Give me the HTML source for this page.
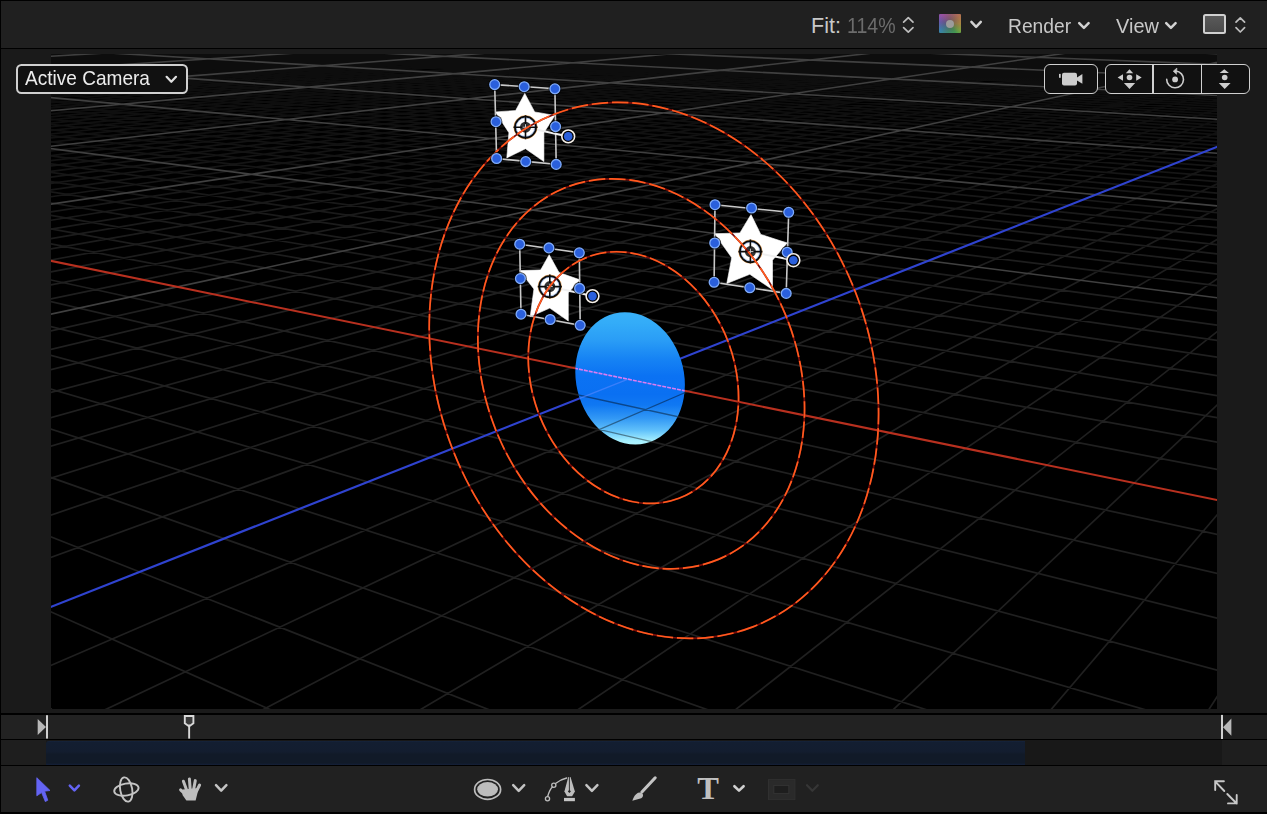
<!DOCTYPE html>
<html><head><meta charset="utf-8"><style>
html,body{margin:0;padding:0;background:#000;width:1269px;height:814px;overflow:hidden;position:relative;font-family:"Liberation Sans",sans-serif}
.a{position:absolute}
.t{position:absolute;white-space:nowrap;line-height:1}
</style></head><body>
<div class="a" style="left:1267px;top:0;width:2px;height:814px;background:#fff"></div>
<div class="a" style="left:1px;top:1px;width:1266px;height:46.5px;background:#202020"></div>
<div class="a" style="left:1px;top:49px;width:1266px;height:664px;background:#1a1a1a"></div>
<div class="a" style="left:1px;top:714.5px;width:1266px;height:24px;background:#222"></div>
<div class="a" style="left:1222px;top:714.5px;width:45px;height:24px;background:#1e1e1e"></div>
<div class="a" style="left:1px;top:740px;width:1266px;height:24.5px;background:#1e1e1e"></div>
<div class="a" style="left:46px;top:740px;width:1176px;height:24.5px;background:#181818"></div>
<div class="a" style="left:46px;top:740.5px;width:979px;height:24px;background:linear-gradient(#15233c 0px,#131e31 1.5px,#131d2f 45%,#111a28 55%,#111a28 92%,#14203a 100%);border-top-left-radius:3px"></div>
<div class="a" style="left:1px;top:766px;width:1266px;height:45.5px;background:#212121"></div>
<svg class="a" style="left:0;top:0" width="1269" height="814" viewBox="0 0 1269 814">
<defs>
<clipPath id="cc"><rect x="51" y="54" width="1166" height="655"/></clipPath>
<linearGradient id="dg" x1="0" y1="312.5" x2="0" y2="444.8" gradientUnits="userSpaceOnUse" gradientTransform="rotate(-76.5 630.1 378.4)">
<stop offset="0" stop-color="#38b0f8"/><stop offset="0.08" stop-color="#33acf8"/><stop offset="0.21" stop-color="#2a9df6"/><stop offset="0.35" stop-color="#1683f4"/>
<stop offset="0.48" stop-color="#0b72f3"/><stop offset="0.62" stop-color="#0a70f2"/><stop offset="0.70" stop-color="#1078f2"/><stop offset="0.80" stop-color="#3298f5"/>
<stop offset="0.89" stop-color="#60c0fa"/><stop offset="0.97" stop-color="#a6f0ff"/><stop offset="1" stop-color="#b0f4ff"/></linearGradient>
<clipPath id="dclip"><ellipse cx="630.1" cy="378.4" rx="66.8" ry="54.0" transform="rotate(76.5 630.1 378.4)"/></clipPath>
<clipPath id="below"><polygon points="1683.6,595.6 -876.5,70.7 1269,900 0,900"/></clipPath>
<linearGradient id="gmg" x1="0" y1="54" x2="0" y2="709" gradientUnits="userSpaceOnUse">
<stop offset="0" stop-color="#666"/><stop offset="0.07" stop-color="#707070"/><stop offset="0.15" stop-color="#999"/><stop offset="0.27" stop-color="#e0e0e0"/><stop offset="0.38" stop-color="#fff"/></linearGradient>
<mask id="gm" maskUnits="userSpaceOnUse" x="0" y="0" width="1269" height="814"><rect x="0" y="0" width="1269" height="814" fill="url(#gmg)"/></mask>
</defs>
<rect x="51" y="54" width="1166" height="655" fill="#000"/>
<g clip-path="url(#cc)">
<path d="M1666.7 2212.0L1689.3 51.2M1666.7 2212.0L-1235.8 86.2M1258.3 1913.0L1670.3 50.6M1670.8 1818.1L-1202.1 84.8M698.9 1503.3L1632.9 49.5M1675.8 1336.6L-1136.9 82.0M499.0 1356.8L1614.5 49.0M1677.5 1178.7L-1105.4 80.6M333.7 1235.8L1596.3 48.5M1678.8 1053.3L-1074.6 79.3M194.9 1134.1L1578.4 48.0M1679.9 951.3L-1044.4 78.0M76.6 1047.5L1560.7 47.5M1680.8 866.7L-1014.9 76.7M-25.4 972.7L1543.2 47.0M1681.5 795.4L-986.1 75.5M-114.3 907.7L1525.9 46.5M1682.2 734.5L-957.8 74.2M-192.4 850.4L1508.8 46.0M1682.7 681.9L-930.1 73.1M-261.6 799.8L1491.9 45.5M1683.2 636.0L-903.1 71.9M-378.7 714.0L1458.6 44.6M1684.0 559.7L-850.5 69.6M-428.7 677.4L1442.3 44.1M1684.3 527.7L-825.0 68.5M-474.1 644.1L1426.2 43.6M1684.6 498.9L-800.1 67.5M-515.4 613.9L1410.2 43.2M1684.9 472.9L-775.6 66.4M-553.2 586.2L1394.4 42.7M1685.1 449.3L-751.6 65.4M-588.0 560.7L1378.8 42.3M1685.4 427.7L-728.0 64.3M-620.0 537.3L1363.4 41.8M1685.6 408.0L-704.9 63.4M-649.6 515.6L1348.1 41.4M1685.8 389.9L-682.3 62.4M-677.0 495.5L1333.0 41.0M1685.9 373.2L-660.1 61.4M-726.3 459.4L1303.3 40.1M1686.3 343.4L-616.8 59.6M-748.5 443.1L1288.7 39.7M1686.4 330.0L-595.8 58.7M-769.4 427.9L1274.3 39.3M1686.5 317.6L-575.1 57.8M-788.9 413.6L1260.0 38.9M1686.7 306.0L-554.9 56.9M-807.3 400.1L1245.8 38.5M1686.8 295.1L-535.0 56.0M-824.6 387.4L1231.8 38.0M1686.9 284.8L-515.4 55.2M-840.9 375.5L1218.0 37.7M1687.0 275.2L-496.2 54.4M-856.4 364.2L1204.3 37.3M1687.1 266.1L-477.3 53.5M-871.0 353.4L1190.7 36.9M1687.2 257.6L-458.7 52.7M-898.0 333.7L1164.0 36.1M1687.3 241.8L-422.5 51.2M-910.5 324.5L1150.9 35.7M1687.4 234.5L-404.8 50.4M-922.4 315.8L1137.8 35.4M1687.5 227.6L-387.5 49.7M-933.8 307.5L1125.0 35.0M1687.5 221.0L-370.4 48.9M-944.6 299.5L1112.2 34.6M1687.6 214.8L-353.6 48.2M-954.9 292.0L1099.6 34.3M1687.7 208.8L-337.1 47.5M-964.8 284.7L1087.1 33.9M1687.7 203.1L-320.9 46.8M-974.3 277.8L1074.7 33.5M1687.8 197.7L-304.9 46.1M-983.3 271.2L1062.5 33.2M1687.8 192.5L-289.1 45.4M-1000.3 258.7L1038.3 32.5M1687.9 182.8L-258.4 44.1M-1008.4 252.8L1026.4 32.2M1688.0 178.2L-243.3 43.5M-1016.0 247.2L1014.6 31.8M1688.0 173.8L-228.5 42.8M-1023.5 241.8L1003.0 31.5M1688.1 169.6L-214.0 42.2M-1030.6 236.6L991.4 31.2M1688.1 165.5L-199.6 41.6M-1037.4 231.5L980.0 30.8M1688.2 161.7L-185.5 41.0M-1044.1 226.7L968.6 30.5M1688.2 157.9L-171.6 40.4M-1050.4 222.0L957.4 30.2M1688.2 154.3L-157.9 39.8M-1056.6 217.5L946.3 29.9M1688.3 150.8L-144.3 39.2M-1068.3 208.9L924.4 29.2M1688.3 144.2L-117.9 38.1M-1073.9 204.9L913.5 28.9M1688.4 141.1L-104.9 37.5M-1079.2 200.9L902.8 28.6M1688.4 138.0L-92.2 37.0M-1084.5 197.1L892.2 28.3M1688.4 135.1L-79.6 36.4M-1089.5 193.4L881.7 28.0M1688.5 132.3L-67.2 35.9M-1094.4 189.8L871.3 27.7M1688.5 129.5L-55.0 35.4M-1099.1 186.4L860.9 27.4M1688.5 126.9L-42.9 34.8M-1103.7 183.0L850.7 27.1M1688.6 124.3L-31.0 34.3M-1108.2 179.7L840.6 26.8M1688.6 121.8L-19.3 33.8M-1116.7 173.5L820.5 26.3M1688.6 117.0L3.7 32.8M-1120.8 170.5L810.7 26.0M1688.7 114.7L15.0 32.3M-1124.8 167.6L800.9 25.7M1688.7 112.5L26.1 31.9M-1128.6 164.7L791.2 25.4M1688.7 110.4L37.0 31.4M-1132.4 162.0L781.6 25.1M1688.7 108.3L47.9 30.9M-1136.0 159.3L772.0 24.9M1688.7 106.2L58.5 30.5M-1139.6 156.7L762.6 24.6M1688.8 104.3L69.1 30.0M-1143.1 154.2L753.2 24.3M1688.8 102.3L79.5 29.6M-1146.4 151.7L743.9 24.1M1688.8 100.4L89.8 29.1M-1152.9 146.9L725.6 23.5M1688.8 96.8L110.0 28.2M-1156.1 144.6L716.5 23.3M1688.9 95.1L119.8 27.8M-1159.1 142.4L707.6 23.0M1688.9 93.4L129.6 27.4M-1162.1 140.2L698.7 22.8M1688.9 91.8L139.3 27.0M-1165.0 138.1L689.8 22.5M1688.9 90.1L148.8 26.6M-1167.9 136.0L681.1 22.3M1688.9 88.6L158.2 26.2M-1170.6 134.0L672.4 22.0M1688.9 87.0L167.5 25.8M-1173.3 132.0L663.8 21.8M1689.0 85.5L176.7 25.4M-1176.0 130.1L655.3 21.5M1689.0 84.1L185.8 25.0M-1181.1 126.3L638.4 21.0M1689.0 81.3L203.6 24.2M-1183.6 124.5L630.1 20.8M1689.0 79.9L212.4 23.8M-1186.0 122.7L621.8 20.6M1689.0 78.6L221.0 23.5M-1188.3 121.0L613.6 20.3M1689.0 77.3L229.6 23.1M-1190.7 119.3L605.5 20.1M1689.1 76.0L238.0 22.7M-1192.9 117.7L597.4 19.9M1689.1 74.7L246.4 22.4M-1195.1 116.0L589.5 19.6M1689.1 73.5L254.7 22.0M-1197.3 114.4L581.5 19.4M1689.1 72.3L262.8 21.7M-1199.4 112.9L573.6 19.2M1689.1 71.1L270.9 21.3M-1203.6 109.9L558.1 18.7M1689.1 68.9L286.8 20.6M-1205.6 108.4L550.4 18.5M1689.1 67.8L294.6 20.3M-1207.5 107.0L542.8 18.3M1689.2 66.7L302.3 20.0M-1209.5 105.5L535.2 18.1M1689.2 65.6L310.0 19.6M-1211.3 104.2L527.7 17.9M1689.2 64.6L317.5 19.3M-1213.2 102.8L520.3 17.6M1689.2 63.6L325.0 19.0M-1215.0 101.5L512.9 17.4M1689.2 62.6L332.4 18.7M-1216.8 100.2L505.5 17.2M1689.2 61.6L339.7 18.3M-1218.5 98.9L498.2 17.0M1689.2 60.6L346.9 18.0M-1221.9 96.4L483.8 16.6M1689.2 58.8L361.2 17.4M-1223.6 95.2L476.7 16.4M1689.3 57.9L368.2 17.1M-1225.2 94.0L469.7 16.2M1689.3 57.0L375.1 16.8M-1226.8 92.8L462.7 16.0M1689.3 56.1L382.0 16.5M-1228.4 91.7L455.7 15.8M1689.3 55.2L388.8 16.2M-1229.9 90.5L448.8 15.6M1689.3 54.4L395.5 15.9M-1231.4 89.4L441.9 15.4M1689.3 53.6L402.1 15.7M-1232.9 88.4L435.1 15.2M1689.3 52.8L408.7 15.4M-1234.4 87.3L428.4 15.0M1689.3 52.0L415.2 15.1" stroke="#202020" stroke-width="1.7" fill="none" mask="url(#gm)"/>
<path d="M945.8 1684.1L1651.4 50.1M1673.7 1541.5L-1169.1 83.4M-702.5 476.8L1318.1 40.5M1686.1 357.7L-638.2 60.5M-884.8 343.3L1177.3 36.5M1687.2 249.5L-440.4 52.0M-992.0 264.8L1050.3 32.8M1687.9 187.5L-273.6 44.8M-1062.6 213.1L935.3 29.5M1688.3 147.4L-131.0 38.6M-1112.5 176.6L830.5 26.5M1688.6 119.4L-7.7 33.3M-1149.7 149.3L734.7 23.8M1688.8 98.6L99.9 28.7M-1178.6 128.2L646.8 21.3M1689.0 82.7L194.8 24.6M-1201.5 111.4L565.8 19.0M1689.1 70.0L278.9 21.0M-1220.3 97.6L491.0 16.8M1689.2 59.7L354.1 17.7M-1235.8 86.2L421.7 14.8M1689.3 51.2L421.7 14.8" stroke="#404040" stroke-width="1.6" fill="none"/>
<line x1="1683.6" y1="595.6" x2="-876.5" y2="70.7" stroke="#b8301f" stroke-width="2"/>
<line x1="-323.3" y1="754.6" x2="1475.2" y2="45.0" stroke="#2f43cf" stroke-width="2.2"/>
<ellipse cx="630.1" cy="378.4" rx="66.8" ry="54.0" transform="rotate(76.5 630.1 378.4)" fill="url(#dg)"/>
<g clip-path="url(#dclip)"><g clip-path="url(#below)">
<path d="M1666.7 2212.0L1689.3 51.2M1666.7 2212.0L-1235.8 86.2M1258.3 1913.0L1670.3 50.6M1670.8 1818.1L-1202.1 84.8M698.9 1503.3L1632.9 49.5M1675.8 1336.6L-1136.9 82.0M499.0 1356.8L1614.5 49.0M1677.5 1178.7L-1105.4 80.6M333.7 1235.8L1596.3 48.5M1678.8 1053.3L-1074.6 79.3M194.9 1134.1L1578.4 48.0M1679.9 951.3L-1044.4 78.0M76.6 1047.5L1560.7 47.5M1680.8 866.7L-1014.9 76.7M-25.4 972.7L1543.2 47.0M1681.5 795.4L-986.1 75.5M-114.3 907.7L1525.9 46.5M1682.2 734.5L-957.8 74.2M-192.4 850.4L1508.8 46.0M1682.7 681.9L-930.1 73.1M-261.6 799.8L1491.9 45.5M1683.2 636.0L-903.1 71.9M-378.7 714.0L1458.6 44.6M1684.0 559.7L-850.5 69.6M-428.7 677.4L1442.3 44.1M1684.3 527.7L-825.0 68.5M-474.1 644.1L1426.2 43.6M1684.6 498.9L-800.1 67.5M-515.4 613.9L1410.2 43.2M1684.9 472.9L-775.6 66.4M-553.2 586.2L1394.4 42.7M1685.1 449.3L-751.6 65.4M-588.0 560.7L1378.8 42.3M1685.4 427.7L-728.0 64.3M-620.0 537.3L1363.4 41.8M1685.6 408.0L-704.9 63.4M-649.6 515.6L1348.1 41.4M1685.8 389.9L-682.3 62.4M-677.0 495.5L1333.0 41.0M1685.9 373.2L-660.1 61.4M-726.3 459.4L1303.3 40.1M1686.3 343.4L-616.8 59.6M-748.5 443.1L1288.7 39.7M1686.4 330.0L-595.8 58.7M-769.4 427.9L1274.3 39.3M1686.5 317.6L-575.1 57.8M-788.9 413.6L1260.0 38.9M1686.7 306.0L-554.9 56.9M-807.3 400.1L1245.8 38.5M1686.8 295.1L-535.0 56.0M-824.6 387.4L1231.8 38.0M1686.9 284.8L-515.4 55.2M-840.9 375.5L1218.0 37.7M1687.0 275.2L-496.2 54.4M-856.4 364.2L1204.3 37.3M1687.1 266.1L-477.3 53.5M-871.0 353.4L1190.7 36.9M1687.2 257.6L-458.7 52.7M-898.0 333.7L1164.0 36.1M1687.3 241.8L-422.5 51.2M-910.5 324.5L1150.9 35.7M1687.4 234.5L-404.8 50.4M-922.4 315.8L1137.8 35.4M1687.5 227.6L-387.5 49.7M-933.8 307.5L1125.0 35.0M1687.5 221.0L-370.4 48.9M-944.6 299.5L1112.2 34.6M1687.6 214.8L-353.6 48.2M-954.9 292.0L1099.6 34.3M1687.7 208.8L-337.1 47.5M-964.8 284.7L1087.1 33.9M1687.7 203.1L-320.9 46.8M-974.3 277.8L1074.7 33.5M1687.8 197.7L-304.9 46.1M-983.3 271.2L1062.5 33.2M1687.8 192.5L-289.1 45.4M-1000.3 258.7L1038.3 32.5M1687.9 182.8L-258.4 44.1M-1008.4 252.8L1026.4 32.2M1688.0 178.2L-243.3 43.5M-1016.0 247.2L1014.6 31.8M1688.0 173.8L-228.5 42.8M-1023.5 241.8L1003.0 31.5M1688.1 169.6L-214.0 42.2M-1030.6 236.6L991.4 31.2M1688.1 165.5L-199.6 41.6M-1037.4 231.5L980.0 30.8M1688.2 161.7L-185.5 41.0M-1044.1 226.7L968.6 30.5M1688.2 157.9L-171.6 40.4M-1050.4 222.0L957.4 30.2M1688.2 154.3L-157.9 39.8M-1056.6 217.5L946.3 29.9M1688.3 150.8L-144.3 39.2M-1068.3 208.9L924.4 29.2M1688.3 144.2L-117.9 38.1M-1073.9 204.9L913.5 28.9M1688.4 141.1L-104.9 37.5M-1079.2 200.9L902.8 28.6M1688.4 138.0L-92.2 37.0M-1084.5 197.1L892.2 28.3M1688.4 135.1L-79.6 36.4M-1089.5 193.4L881.7 28.0M1688.5 132.3L-67.2 35.9M-1094.4 189.8L871.3 27.7M1688.5 129.5L-55.0 35.4M-1099.1 186.4L860.9 27.4M1688.5 126.9L-42.9 34.8M-1103.7 183.0L850.7 27.1M1688.6 124.3L-31.0 34.3M-1108.2 179.7L840.6 26.8M1688.6 121.8L-19.3 33.8M-1116.7 173.5L820.5 26.3M1688.6 117.0L3.7 32.8M-1120.8 170.5L810.7 26.0M1688.7 114.7L15.0 32.3M-1124.8 167.6L800.9 25.7M1688.7 112.5L26.1 31.9M-1128.6 164.7L791.2 25.4M1688.7 110.4L37.0 31.4M-1132.4 162.0L781.6 25.1M1688.7 108.3L47.9 30.9M-1136.0 159.3L772.0 24.9M1688.7 106.2L58.5 30.5M-1139.6 156.7L762.6 24.6M1688.8 104.3L69.1 30.0M-1143.1 154.2L753.2 24.3M1688.8 102.3L79.5 29.6M-1146.4 151.7L743.9 24.1M1688.8 100.4L89.8 29.1M-1152.9 146.9L725.6 23.5M1688.8 96.8L110.0 28.2M-1156.1 144.6L716.5 23.3M1688.9 95.1L119.8 27.8M-1159.1 142.4L707.6 23.0M1688.9 93.4L129.6 27.4M-1162.1 140.2L698.7 22.8M1688.9 91.8L139.3 27.0M-1165.0 138.1L689.8 22.5M1688.9 90.1L148.8 26.6M-1167.9 136.0L681.1 22.3M1688.9 88.6L158.2 26.2M-1170.6 134.0L672.4 22.0M1688.9 87.0L167.5 25.8M-1173.3 132.0L663.8 21.8M1689.0 85.5L176.7 25.4M-1176.0 130.1L655.3 21.5M1689.0 84.1L185.8 25.0M-1181.1 126.3L638.4 21.0M1689.0 81.3L203.6 24.2M-1183.6 124.5L630.1 20.8M1689.0 79.9L212.4 23.8M-1186.0 122.7L621.8 20.6M1689.0 78.6L221.0 23.5M-1188.3 121.0L613.6 20.3M1689.0 77.3L229.6 23.1M-1190.7 119.3L605.5 20.1M1689.1 76.0L238.0 22.7M-1192.9 117.7L597.4 19.9M1689.1 74.7L246.4 22.4M-1195.1 116.0L589.5 19.6M1689.1 73.5L254.7 22.0M-1197.3 114.4L581.5 19.4M1689.1 72.3L262.8 21.7M-1199.4 112.9L573.6 19.2M1689.1 71.1L270.9 21.3M-1203.6 109.9L558.1 18.7M1689.1 68.9L286.8 20.6M-1205.6 108.4L550.4 18.5M1689.1 67.8L294.6 20.3M-1207.5 107.0L542.8 18.3M1689.2 66.7L302.3 20.0M-1209.5 105.5L535.2 18.1M1689.2 65.6L310.0 19.6M-1211.3 104.2L527.7 17.9M1689.2 64.6L317.5 19.3M-1213.2 102.8L520.3 17.6M1689.2 63.6L325.0 19.0M-1215.0 101.5L512.9 17.4M1689.2 62.6L332.4 18.7M-1216.8 100.2L505.5 17.2M1689.2 61.6L339.7 18.3M-1218.5 98.9L498.2 17.0M1689.2 60.6L346.9 18.0M-1221.9 96.4L483.8 16.6M1689.2 58.8L361.2 17.4M-1223.6 95.2L476.7 16.4M1689.3 57.9L368.2 17.1M-1225.2 94.0L469.7 16.2M1689.3 57.0L375.1 16.8M-1226.8 92.8L462.7 16.0M1689.3 56.1L382.0 16.5M-1228.4 91.7L455.7 15.8M1689.3 55.2L388.8 16.2M-1229.9 90.5L448.8 15.6M1689.3 54.4L395.5 15.9M-1231.4 89.4L441.9 15.4M1689.3 53.6L402.1 15.7M-1232.9 88.4L435.1 15.2M1689.3 52.8L408.7 15.4M-1234.4 87.3L428.4 15.0M1689.3 52.0L415.2 15.1" stroke="#000" stroke-opacity="0.42" stroke-width="1.3" fill="none"/>
</g>
<line x1="818.0" y1="418.1" x2="468.1" y2="346.4" stroke="#dc7cf2" stroke-width="1.6" stroke-dasharray="4 1"/>
<line x1="485.9" y1="435.3" x2="628.1" y2="379.2" stroke="#5a88ff" stroke-opacity="0.6" stroke-width="1.4"/>
</g>
<polygon points="524.8,93.4 534.7,111.9 554.9,115.5 543.9,132.7 543.9,161.6 525.5,148.7 506.8,157.9 508.9,132.7 495.4,111.9 515.6,110.6" fill="#fff" stroke="#fff" stroke-width="0.6" stroke-linejoin="round"/><polygon points="549.2,254.7 559.0,272.5 579.9,279.8 568.3,292.7 568.3,321.0 549.8,308.1 530.2,316.7 533.9,289.0 519.7,270.6 540.6,270.0" fill="#fff" stroke="#fff" stroke-width="0.6" stroke-linejoin="round"/><polygon points="751.0,214.5 760.8,234.4 787.2,243.0 772.5,260.2 772.5,289.7 749.8,274.3 726.8,283.5 731.7,257.7 714.7,233.8 739.9,232.9" fill="#fff" stroke="#fff" stroke-width="0.6" stroke-linejoin="round"/><path d="M494.7 84.6 L554.9 88.8 L556.2 164.4 L496.6 158.5Z" fill="none" stroke="#c8c8c8" stroke-width="1.6"/><line x1="525.5" y1="127.2" x2="568.2" y2="136.4" stroke="#f0f0f0" stroke-width="2"/><circle cx="525.5" cy="127.2" r="5.5" fill="#333"/><circle cx="525.5" cy="127.2" r="11.6" fill="none" stroke="#e08a30" stroke-width="0.8"/><circle cx="525.5" cy="127.2" r="10.5" fill="none" stroke="#0a0a0a" stroke-width="1.8"/><circle cx="525.5" cy="127.2" r="9.3" fill="none" stroke="#3a70d0" stroke-width="0.6" stroke-opacity="0.7"/><path d="M513.5 127.2H537.5M525.5 115.2V139.2" stroke="#0a0a0a" stroke-width="1.6"/><path d="M522.5 127.2H528.5M525.5 124.2V130.2" stroke="#ccc" stroke-width="1"/><path d="M519.7 244.2 L579.3 252.8 L580.2 325.3 L521.0 314.2Z" fill="none" stroke="#c8c8c8" stroke-width="1.6"/><line x1="549.8" y1="286.6" x2="592.5" y2="296.1" stroke="#f0f0f0" stroke-width="2"/><circle cx="549.8" cy="286.6" r="5.5" fill="#333"/><circle cx="549.8" cy="286.6" r="11.6" fill="none" stroke="#e08a30" stroke-width="0.8"/><circle cx="549.8" cy="286.6" r="10.5" fill="none" stroke="#0a0a0a" stroke-width="1.8"/><circle cx="549.8" cy="286.6" r="9.3" fill="none" stroke="#3a70d0" stroke-width="0.6" stroke-opacity="0.7"/><path d="M537.8 286.6H561.8M549.8 274.6V298.6" stroke="#0a0a0a" stroke-width="1.6"/><path d="M546.8 286.6H552.8M549.8 283.6V289.6" stroke="#ccc" stroke-width="1"/><path d="M715.0 204.7 L788.7 212.3 L786.2 293.4 L714.1 282.3Z" fill="none" stroke="#c8c8c8" stroke-width="1.6"/><line x1="750.4" y1="251.6" x2="793.4" y2="260.2" stroke="#f0f0f0" stroke-width="2"/><circle cx="750.4" cy="251.6" r="5.5" fill="#333"/><circle cx="750.4" cy="251.6" r="11.6" fill="none" stroke="#e08a30" stroke-width="0.8"/><circle cx="750.4" cy="251.6" r="10.5" fill="none" stroke="#0a0a0a" stroke-width="1.8"/><circle cx="750.4" cy="251.6" r="9.3" fill="none" stroke="#3a70d0" stroke-width="0.6" stroke-opacity="0.7"/><path d="M738.4 251.6H762.4M750.4 239.6V263.6" stroke="#0a0a0a" stroke-width="1.6"/><path d="M747.4 251.6H753.4M750.4 248.6V254.6" stroke="#ccc" stroke-width="1"/>
<ellipse cx="653.9" cy="370.4" rx="274.9" ry="216.2" transform="rotate(68.9 653.9 370.4)" fill="none" stroke="#7a0c08" stroke-width="1.7"/><ellipse cx="653.9" cy="370.4" rx="274.9" ry="216.2" transform="rotate(68.9 653.9 370.4)" fill="none" stroke="#ff5a1f" stroke-width="1.7" stroke-dasharray="16.5 3.8"/><ellipse cx="641.2" cy="373.8" rx="201.0" ry="155.9" transform="rotate(67.4 641.2 373.8)" fill="none" stroke="#7a0c08" stroke-width="1.7"/><ellipse cx="641.2" cy="373.8" rx="201.0" ry="155.9" transform="rotate(67.4 641.2 373.8)" fill="none" stroke="#ff5a1f" stroke-width="1.7" stroke-dasharray="16.5 3.8"/><ellipse cx="633.4" cy="377.6" rx="129.0" ry="101.3" transform="rotate(69.3 633.4 377.6)" fill="none" stroke="#7a0c08" stroke-width="1.7"/><ellipse cx="633.4" cy="377.6" rx="129.0" ry="101.3" transform="rotate(69.3 633.4 377.6)" fill="none" stroke="#ff5a1f" stroke-width="1.7" stroke-dasharray="16.5 3.8"/>
<circle cx="494.7" cy="84.6" r="6.4" fill="#000" opacity="0.7"/><circle cx="494.7" cy="84.6" r="4.9" fill="#2a5fdc" stroke="#80acfa" stroke-width="1.3"/><circle cx="524.2" cy="86.7" r="6.4" fill="#000" opacity="0.7"/><circle cx="524.2" cy="86.7" r="4.9" fill="#2a5fdc" stroke="#80acfa" stroke-width="1.3"/><circle cx="554.9" cy="88.8" r="6.4" fill="#000" opacity="0.7"/><circle cx="554.9" cy="88.8" r="4.9" fill="#2a5fdc" stroke="#80acfa" stroke-width="1.3"/><circle cx="555.6" cy="126.6" r="6.4" fill="#000" opacity="0.7"/><circle cx="555.6" cy="126.6" r="4.9" fill="#2a5fdc" stroke="#80acfa" stroke-width="1.3"/><circle cx="556.2" cy="164.4" r="6.4" fill="#000" opacity="0.7"/><circle cx="556.2" cy="164.4" r="4.9" fill="#2a5fdc" stroke="#80acfa" stroke-width="1.3"/><circle cx="525.7" cy="161.6" r="6.4" fill="#000" opacity="0.7"/><circle cx="525.7" cy="161.6" r="4.9" fill="#2a5fdc" stroke="#80acfa" stroke-width="1.3"/><circle cx="496.6" cy="158.5" r="6.4" fill="#000" opacity="0.7"/><circle cx="496.6" cy="158.5" r="4.9" fill="#2a5fdc" stroke="#80acfa" stroke-width="1.3"/><circle cx="496" cy="121.7" r="6.4" fill="#000" opacity="0.7"/><circle cx="496" cy="121.7" r="4.9" fill="#2a5fdc" stroke="#80acfa" stroke-width="1.3"/><circle cx="568.2" cy="136.4" r="6.4" fill="#000" stroke="#f6f0e8" stroke-width="1.6"/><circle cx="568.2" cy="136.4" r="4.3" fill="#2a5fdc"/><circle cx="519.7" cy="244.2" r="6.4" fill="#000" opacity="0.7"/><circle cx="519.7" cy="244.2" r="4.9" fill="#2a5fdc" stroke="#80acfa" stroke-width="1.3"/><circle cx="548.9" cy="247.9" r="6.4" fill="#000" opacity="0.7"/><circle cx="548.9" cy="247.9" r="4.9" fill="#2a5fdc" stroke="#80acfa" stroke-width="1.3"/><circle cx="579.3" cy="252.8" r="6.4" fill="#000" opacity="0.7"/><circle cx="579.3" cy="252.8" r="4.9" fill="#2a5fdc" stroke="#80acfa" stroke-width="1.3"/><circle cx="579.6" cy="288.4" r="6.4" fill="#000" opacity="0.7"/><circle cx="579.6" cy="288.4" r="4.9" fill="#2a5fdc" stroke="#80acfa" stroke-width="1.3"/><circle cx="580.2" cy="325.3" r="6.4" fill="#000" opacity="0.7"/><circle cx="580.2" cy="325.3" r="4.9" fill="#2a5fdc" stroke="#80acfa" stroke-width="1.3"/><circle cx="550.2" cy="319.5" r="6.4" fill="#000" opacity="0.7"/><circle cx="550.2" cy="319.5" r="4.9" fill="#2a5fdc" stroke="#80acfa" stroke-width="1.3"/><circle cx="521" cy="314.2" r="6.4" fill="#000" opacity="0.7"/><circle cx="521" cy="314.2" r="4.9" fill="#2a5fdc" stroke="#80acfa" stroke-width="1.3"/><circle cx="520.4" cy="278.6" r="6.4" fill="#000" opacity="0.7"/><circle cx="520.4" cy="278.6" r="4.9" fill="#2a5fdc" stroke="#80acfa" stroke-width="1.3"/><circle cx="592.5" cy="296.1" r="6.4" fill="#000" stroke="#f6f0e8" stroke-width="1.6"/><circle cx="592.5" cy="296.1" r="4.3" fill="#2a5fdc"/><circle cx="715" cy="204.7" r="6.4" fill="#000" opacity="0.7"/><circle cx="715" cy="204.7" r="4.9" fill="#2a5fdc" stroke="#80acfa" stroke-width="1.3"/><circle cx="751.6" cy="208" r="6.4" fill="#000" opacity="0.7"/><circle cx="751.6" cy="208" r="4.9" fill="#2a5fdc" stroke="#80acfa" stroke-width="1.3"/><circle cx="788.7" cy="212.3" r="6.4" fill="#000" opacity="0.7"/><circle cx="788.7" cy="212.3" r="4.9" fill="#2a5fdc" stroke="#80acfa" stroke-width="1.3"/><circle cx="787.2" cy="252.2" r="6.4" fill="#000" opacity="0.7"/><circle cx="787.2" cy="252.2" r="4.9" fill="#2a5fdc" stroke="#80acfa" stroke-width="1.3"/><circle cx="786.2" cy="293.4" r="6.4" fill="#000" opacity="0.7"/><circle cx="786.2" cy="293.4" r="4.9" fill="#2a5fdc" stroke="#80acfa" stroke-width="1.3"/><circle cx="749.8" cy="287.8" r="6.4" fill="#000" opacity="0.7"/><circle cx="749.8" cy="287.8" r="4.9" fill="#2a5fdc" stroke="#80acfa" stroke-width="1.3"/><circle cx="714.1" cy="282.3" r="6.4" fill="#000" opacity="0.7"/><circle cx="714.1" cy="282.3" r="4.9" fill="#2a5fdc" stroke="#80acfa" stroke-width="1.3"/><circle cx="714.7" cy="243" r="6.4" fill="#000" opacity="0.7"/><circle cx="714.7" cy="243" r="4.9" fill="#2a5fdc" stroke="#80acfa" stroke-width="1.3"/><circle cx="793.4" cy="260.2" r="6.4" fill="#000" stroke="#f6f0e8" stroke-width="1.6"/><circle cx="793.4" cy="260.2" r="4.3" fill="#2a5fdc"/>
</g>
</svg>
<!-- top bar -->
<div class="t" style="left:811px;top:15.6px;font-size:21.5px;color:#c8c8c8;transform:scaleX(1.0);transform-origin:0 0">Fit:</div>
<div class="t" style="left:847px;top:15.6px;font-size:21.5px;color:#6c6c6c;transform:scaleX(0.91);transform-origin:0 0">114%</div>
<svg class="a" style="left:900px;top:14px" width="16" height="22" viewBox="900 14 16 22"><path d="M903.6 22.2L908.3 17.6L913 22.2M903.6 27.6L908.3 32.2L913 27.6" fill="none" stroke="#bdbdbd" stroke-width="1.7" stroke-linecap="round" stroke-linejoin="round"/></svg>
<div class="a" style="left:938.5px;top:14.1px;width:22.6px;height:19.3px;border-radius:1px;overflow:hidden;background:conic-gradient(from 0deg at 50% 50%,#a25a78 0deg,#b07050 50deg,#b08a40 90deg,#78a040 125deg,#40a050 150deg,#3a9078 195deg,#3a80aa 235deg,#6a58b0 280deg,#9a50a0 320deg,#a25a78 360deg)"><div style="position:absolute;inset:0;background:radial-gradient(circle at 50% 50%,rgba(85,85,85,.75) 0%,rgba(85,85,85,.35) 45%,rgba(85,85,85,0) 80%)"></div></div>
<div class="a" style="left:945.8px;top:20px;width:8px;height:8px;border-radius:50%;background:#9c9c9c"></div>
<svg class="a" style="left:966px;top:16px" width="20" height="16" viewBox="966 16 20 16"><path d="M971.4 21.8L976.1 26.8L980.8 21.8" fill="none" stroke="#d2d2d2" stroke-width="2.5" stroke-linecap="round" stroke-linejoin="round"/></svg>
<div class="t" style="left:1008px;top:15.7px;font-size:20.8px;color:#c8c8c8;transform:scaleX(0.925);transform-origin:0 0">Render</div>
<svg class="a" style="left:1074px;top:16px" width="20" height="16" viewBox="1074 16 20 16"><path d="M1079.2 23.1L1083.9 27.8L1088.6 23.1" fill="none" stroke="#d2d2d2" stroke-width="2.5" stroke-linecap="round" stroke-linejoin="round"/></svg>
<div class="t" style="left:1115.5px;top:16px;font-size:20.8px;color:#c8c8c8;transform:scaleX(0.96);transform-origin:0 0">View</div>
<svg class="a" style="left:1161px;top:16px" width="20" height="16" viewBox="1161 16 20 16"><path d="M1166.2 23.1L1170.9 27.8L1175.6 23.1" fill="none" stroke="#d2d2d2" stroke-width="2.5" stroke-linecap="round" stroke-linejoin="round"/></svg>
<div class="a" style="left:1203.3px;top:14.1px;width:23.1px;height:19.5px;box-sizing:border-box;border:2px solid #d0d0d0;border-radius:2.5px;background:linear-gradient(#5a5a5a,#4a4a4a)"></div>
<svg class="a" style="left:1232px;top:14px" width="16" height="22" viewBox="1232 14 16 22"><path d="M1236 22.2L1240.3 17.8L1244.6 22.2M1236 27.6L1240.3 32L1244.6 27.6" fill="none" stroke="#bdbdbd" stroke-width="1.7" stroke-linecap="round" stroke-linejoin="round"/></svg>
<!-- active camera -->
<div class="a" style="left:16px;top:64px;width:172.3px;height:30px;box-sizing:border-box;border:2px solid #d0d0d0;border-radius:5.5px;background:#111"></div>
<div class="t" style="left:25px;top:67.7px;font-size:20.6px;color:#ececec;transform:scaleX(0.925);transform-origin:0 0">Active Camera</div>
<svg class="a" style="left:160px;top:70px" width="22" height="18" viewBox="160 70 22 18"><path d="M166.6 76.8L171.3 81.8L176 76.8" fill="none" stroke="#e0e0e0" stroke-width="2.2" stroke-linecap="round" stroke-linejoin="round"/></svg>
<!-- camera buttons -->
<div class="a" style="left:1044.2px;top:64.1px;width:53.8px;height:29.7px;box-sizing:border-box;border:1.7px solid #d0d0d0;border-radius:6px;background:#111"></div>
<div class="a" style="left:1105.2px;top:64px;width:144.4px;height:29.9px;box-sizing:border-box;border:1.7px solid #d0d0d0;border-radius:6px;background:#111"></div>
<div class="a" style="left:1152.4px;top:65px;width:1.7px;height:28px;background:#d0d0d0"></div>
<div class="a" style="left:1200.5px;top:65px;width:1.7px;height:28px;background:#d0d0d0"></div>
<svg class="a" style="left:1040px;top:60px" width="215" height="38" viewBox="1040 60 215 38">
<rect x="1062" y="72.7" width="15" height="12.7" rx="2" fill="#cdcdcd"/>
<rect x="1059" y="73.9" width="1.7" height="3.9" fill="#cdcdcd"/>
<path d="M1077 77.5L1082.4 73.9V83.7L1077 80.5Z" fill="#cdcdcd"/>
<circle cx="1129.5" cy="77.5" r="2.8" fill="#cdcdcd"/>
<path d="M1117.6 77.5L1123 74.3V80.7Z M1141.7 77.5L1136.2 74.3V80.7Z M1129.5 69.3L1133.2 73.2H1125.8Z M1129.5 89.1L1135.2 82.9H1123.9Z" fill="#cdcdcd"/>
<circle cx="1175.1" cy="79.4" r="2.9" fill="#cdcdcd"/>
<path d="M1166.7 79.4A8.4 8.4 0 1 0 1175.8 71" fill="none" stroke="#cdcdcd" stroke-width="1.6" stroke-linecap="round"/>
<path d="M1173.2 71.2L1176.9 68.1L1176.5 74.3Z" fill="#cdcdcd" stroke="#cdcdcd" stroke-width="0.6" stroke-linejoin="round"/>
<circle cx="1224.7" cy="77.5" r="2.8" fill="#cdcdcd"/>
<path d="M1224.3 69.3L1228.9 72.9H1219.6Z M1224.7 89.1L1230.6 82.9H1218.8Z" fill="#cdcdcd"/>
</svg>
<!-- timeline markers -->
<svg class="a" style="left:0;top:705px" width="1269" height="40" viewBox="0 705 1269 40">
<path d="M37.7 718.9L46 727L37.7 735Z" fill="#b8b8b8"/>
<rect x="46" y="715.2" width="2" height="23.4" fill="#d0d0d0"/>
<path d="M184.8 716H193.4V723.2L189.1 726.4L184.8 723.2Z" fill="#3a3a3a" stroke="#d8d8d8" stroke-width="1.9" stroke-linejoin="miter"/>
<rect x="188.2" y="724.5" width="1.9" height="14.1" fill="#d8d8d8"/>
<rect x="1221" y="714.9" width="2" height="24.1" fill="#d0d0d0"/>
<path d="M1231.4 718.6L1223 727.2L1231.4 735.8Z" fill="#b8b8b8"/>
</svg>
<!-- bottom toolbar -->
<svg class="a" style="left:0;top:766px" width="1269" height="46" viewBox="0 766 1269 46">
<path d="M36.8 777.7L50 790.5L44.6 791.2L47.8 800.2L45.3 801.6L41.6 792.6L36.8 795.8Z" fill="#6464f4" stroke="#6464f4" stroke-width="0.8" stroke-linejoin="round"/>
<path d="M69.8 785.6L74.4 790.4L78.9 785.6" fill="none" stroke="#6464f4" stroke-width="2.5" stroke-linecap="round" stroke-linejoin="round"/>
<ellipse cx="126.2" cy="789.5" rx="6" ry="12.3" transform="rotate(-10.5 126.2 789.5)" fill="none" stroke="#c4c4c4" stroke-width="1.9"/>
<ellipse cx="126.4" cy="789.5" rx="12.3" ry="6" transform="rotate(-9.6 126.4 789.5)" fill="none" stroke="#c4c4c4" stroke-width="1.9"/>
<path d="M182.5 789.5L198.5 788L197.5 793L195.6 800.4H186.4L182.5 795Z" fill="#bdbdbd"/>
<path d="M186.5 795.5L180.6 789.8M186.8 790.5L183.4 781.2M190.2 789.5L189.4 778.9M193.6 789.5L195.3 780.6M196.6 791L199.6 785" fill="none" stroke="#bdbdbd" stroke-width="3" stroke-linecap="round"/>
<path d="M216 785.2L221.2 790.6L226.4 785.2" fill="none" stroke="#c4c4c4" stroke-width="2.5" stroke-linecap="round" stroke-linejoin="round"/>
<ellipse cx="487.6" cy="789.4" rx="13" ry="9.9" fill="none" stroke="#bdbdbd" stroke-width="1.7"/>
<ellipse cx="487.6" cy="789.3" rx="10.4" ry="7.3" fill="#bdbdbd"/>
<path d="M513.2 785.2L518.7 790.8L524.2 785.2" fill="none" stroke="#c4c4c4" stroke-width="2.5" stroke-linecap="round" stroke-linejoin="round"/>
<path d="M547.6 796.7Q549.5 789.5 553 786.2M555.5 783.5Q560 779.6 566.7 778" fill="none" stroke="#bdbdbd" stroke-width="1.4" stroke-linecap="round"/>
<circle cx="547.5" cy="798.7" r="2.1" fill="#212121" stroke="#bdbdbd" stroke-width="1.3"/>
<circle cx="553.8" cy="785.2" r="2.1" fill="#212121" stroke="#bdbdbd" stroke-width="1.3"/>
<path d="M568.3 777L570.5 777L574.9 791.4L572.1 796.2H567.1L564.4 791.4Z" fill="#bdbdbd"/>
<path d="M569.4 777V790" stroke="#212121" stroke-width="0.9"/>
<path d="M569.4 789.6L570.9 791.4L569.4 793L567.9 791.4Z" fill="#212121"/>
<rect x="564" y="797.9" width="10.9" height="3.3" fill="#c4c4c4"/>
<path d="M586.4 785.2L591.9 790.8L597.4 785.2" fill="none" stroke="#c4c4c4" stroke-width="2.5" stroke-linecap="round" stroke-linejoin="round"/>
<path d="M655.2 777.8L641.9 792" stroke="#c4c4c4" stroke-width="3.1" stroke-linecap="round"/>
<path d="M632.3 800.8Q634.5 794.5 638 792.8Q641.5 791.5 643 794.5Q643.5 797.8 639.5 798.8Z" fill="#bdbdbd"/>
<path d="M734.4 786.2L739 790.6L743.6 786.2" fill="none" stroke="#d0d0d0" stroke-width="2.6" stroke-linecap="round" stroke-linejoin="round"/>
<rect x="768.5" y="779.6" width="26.4" height="20" fill="#2a2a2a" stroke="#303030" stroke-width="1"/>
<rect x="773.8" y="785.4" width="15" height="8.2" fill="#1e1e1e" stroke="#333" stroke-width="1"/>
<path d="M807 785.2L812.4 790.8L817.8 785.2" fill="none" stroke="#363636" stroke-width="2.2" stroke-linecap="round" stroke-linejoin="round"/>
<path d="M1215.3 781.6L1224.3 791M1215.2 790V781.3H1223.9M1236.7 803.5L1227.3 794M1236.7 795V803.4H1228" fill="none" stroke="#c8c8c8" stroke-width="1.9" stroke-linecap="round"/>
</svg>
<div class="t" style="left:697.3px;top:772px;font-size:32.5px;font-family:'Liberation Serif',serif;font-weight:bold;color:#c0c0c0;transform:scaleX(1.0);transform-origin:0 0">T</div>
</body></html>
